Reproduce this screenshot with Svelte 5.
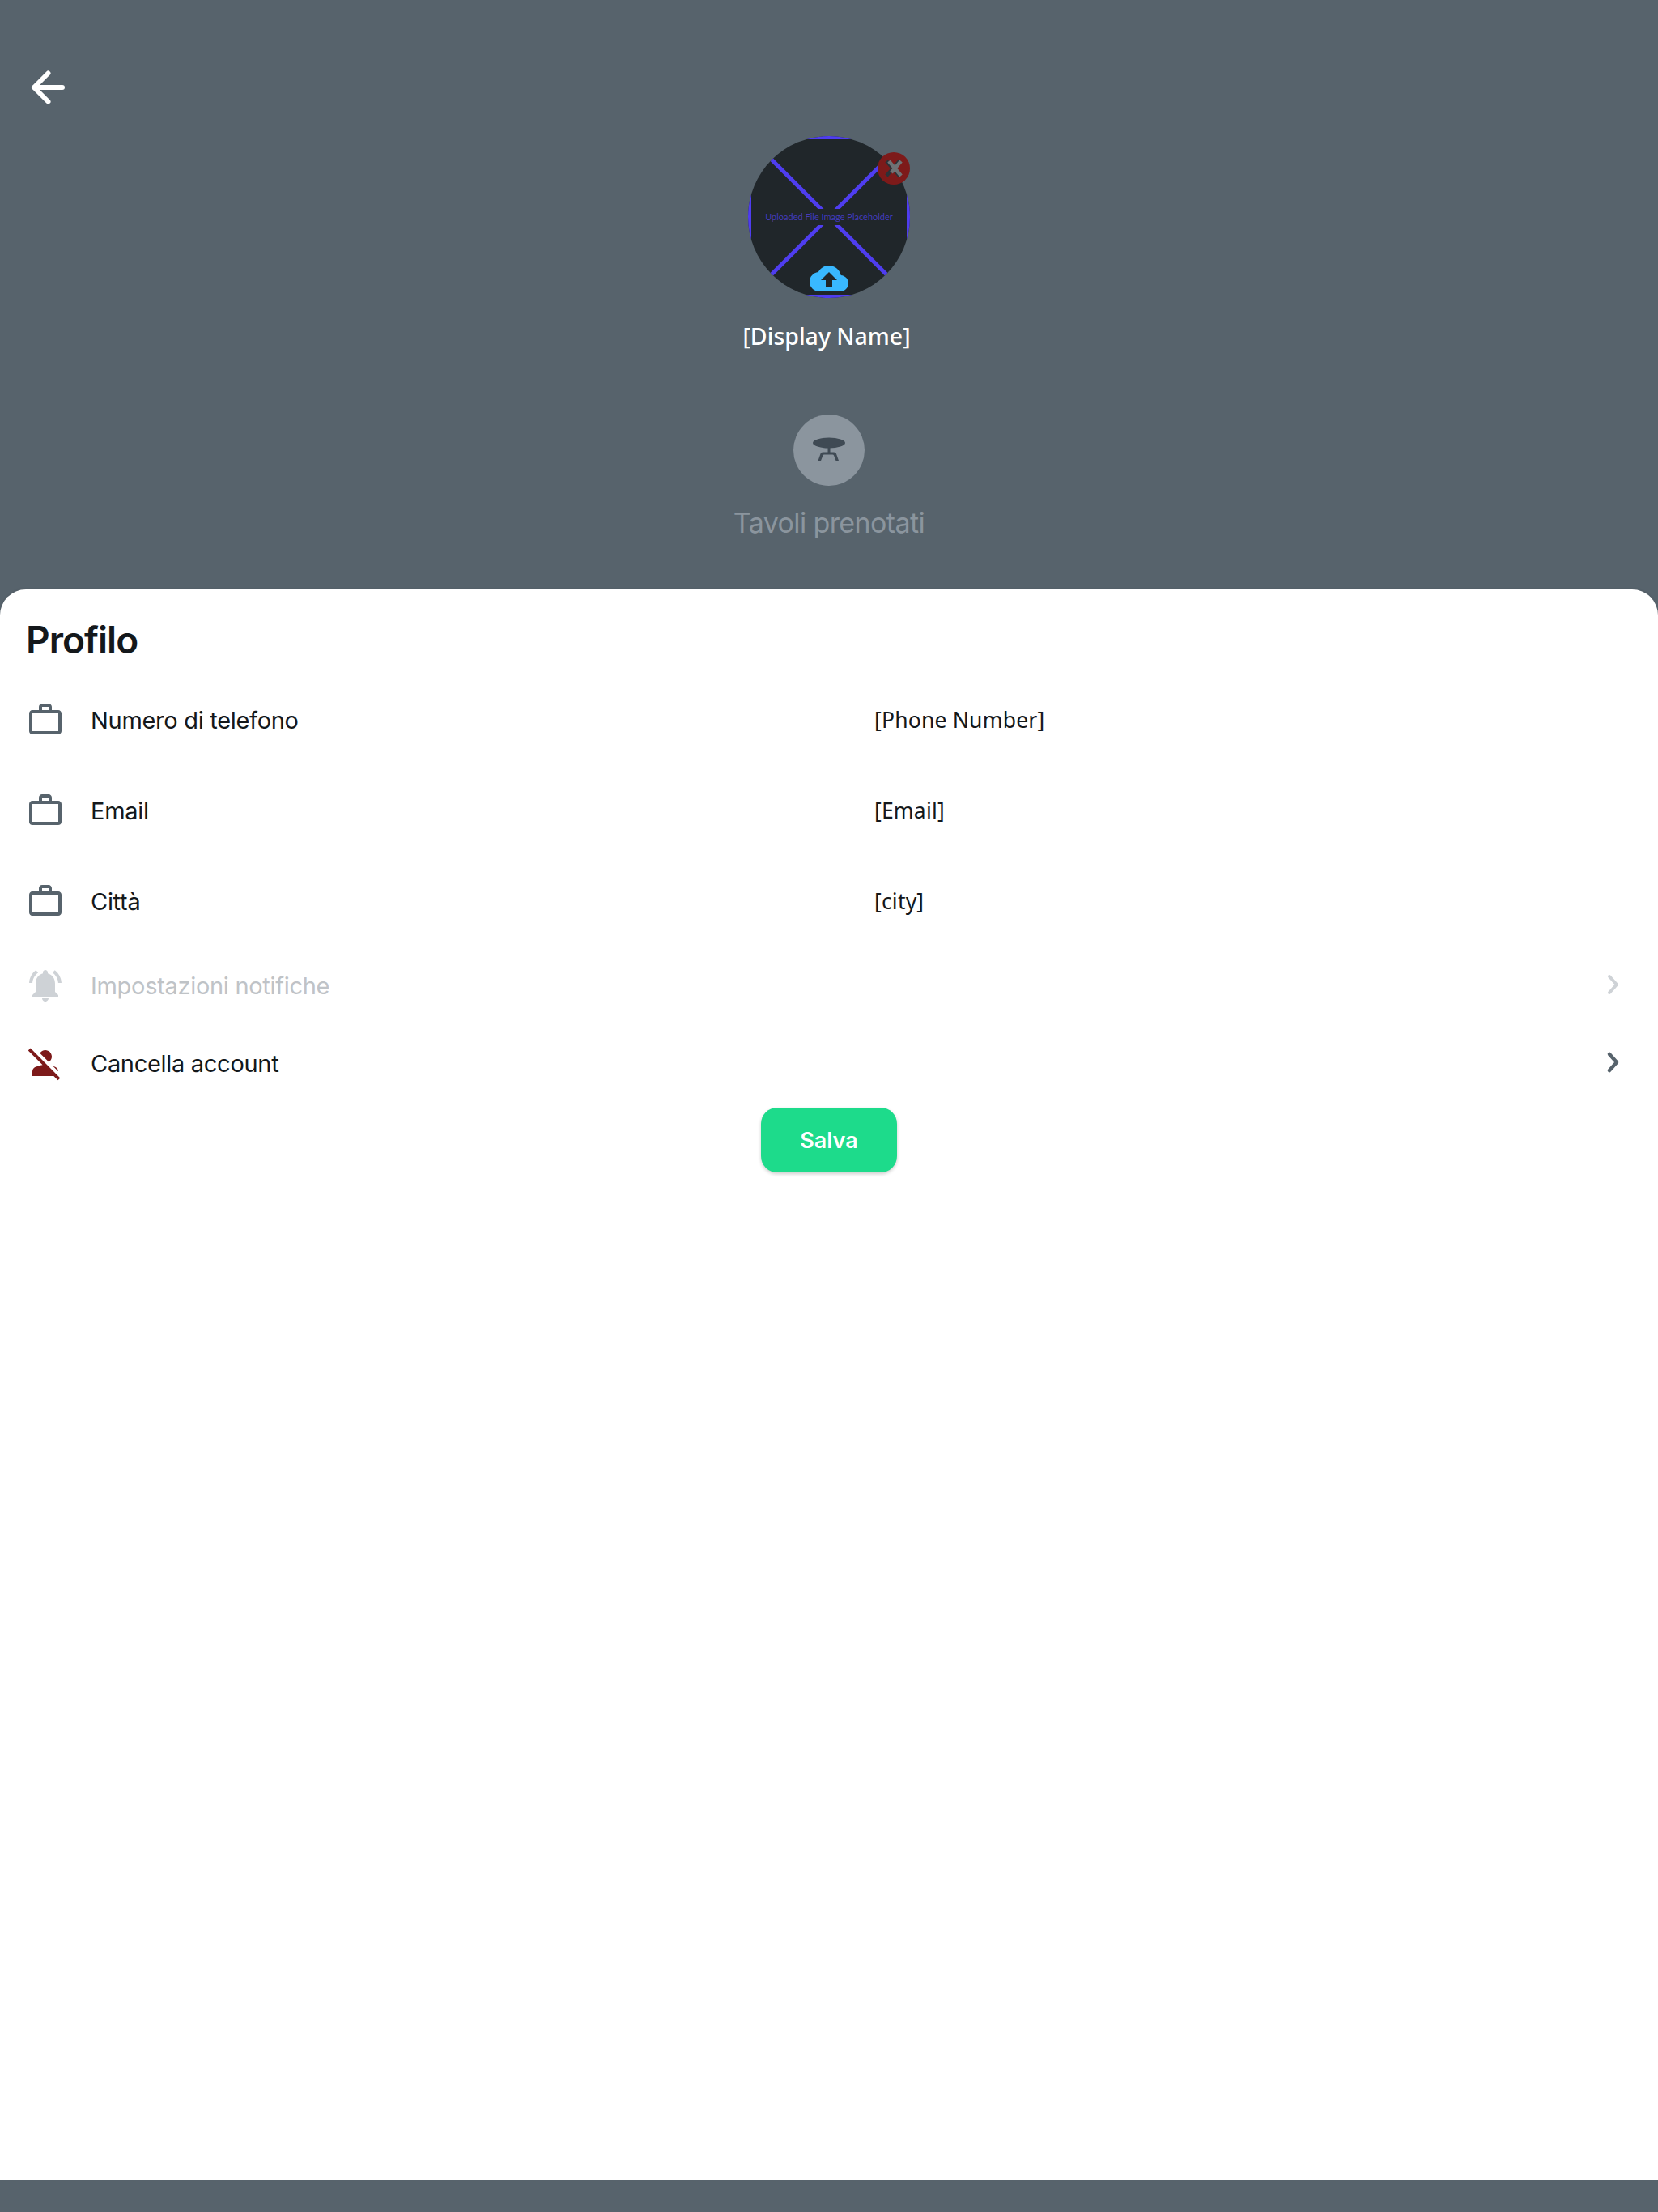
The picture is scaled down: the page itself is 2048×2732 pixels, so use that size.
<script>
  const rows = [
    { label: 'Numero di telefono', value: '[Phone Number]' },
    { label: 'Email', value: '[Email]' },
    { label: 'Città', value: '[city]' }
  ];
</script>

<div class="page">
  <header class="hero">
    <button class="back" aria-label="Indietro">
      <svg width="48" height="48" viewBox="0 0 48 48" fill="none" stroke="#fff" stroke-width="6" stroke-linecap="round" stroke-linejoin="round">
        <path d="M41 24H6M23.500 6.500 6 24l17.500 17.500" />
      </svg>
    </button>

    <div class="avatar">
      <svg class="placeholder" width="200" height="200" viewBox="0 0 200 200">
        <rect width="200" height="200" fill="#20262a" />
        <rect x="2" y="2" width="196" height="196" fill="none" stroke="#4f3df0" stroke-width="4" />
        <path d="M0 0 200 200M200 0 0 200" stroke="#4f3df0" stroke-width="5" />
        <rect x="14" y="90" width="172" height="20" fill="#20262a" />
        <text x="100" y="104" text-anchor="middle" class="ph-text">Uploaded File Image Placeholder</text>
        <path transform="translate(76 152) scale(2)" fill="#39b8ff" d="M19.350 10.040C18.670 6.590 15.640 4 12 4 9.110 4 6.600 5.640 5.350 8.040 2.340 8.360 0 10.910 0 14c0 3.310 2.690 6 6 6h13c2.760 0 5-2.240 5-5 0-2.640-2.050-4.780-4.650-4.960zM14 13v4h-4v-4H7l5-5 5 5h-3z" />
      </svg>
      <span class="remove">
        <svg width="40" height="40" viewBox="0 0 40 40" fill="none" stroke-width="4.500">
          <path d="M11 11l16 18M27 11 11 29" stroke="#2b3238" />
          <path d="M14 11l15 18M29 11 17 25" stroke="#6f7275" />
        </svg>
      </span>
    </div>

    <div class="display-name">[Display Name]</div>

    <div class="table-circle">
      <svg width="48" height="48" viewBox="0 0 48 48" fill="#3f4a54">
        <ellipse cx="24" cy="15" rx="20" ry="6.500" />
        <path d="M22.500 20h3v6.500h4.500c1.500 0 2.500.7 3 2l3 8.500h-3.500l-2.500-6.500c-.3-.7-.8-1-1.500-1H18c-.7 0-1.200.3-1.500 1L14 37h-3.500l3-8.500c.5-1.300 1.500-2 3-2h6z" />
      </svg>
    </div>
    <div class="table-label">Tavoli prenotati</div>
  </header>

  <main class="sheet">
    <h1>Profilo</h1>

    {#each rows as row}
      <div class="row field">
        <div class="left">
          <svg width="48" height="48" viewBox="0 0 24 24" fill="#57636c">
            <path d="M14 6V4h-4v2h4zM4 8v11h16V8H4zm16-2c1.110 0 2 .890 2 2v11c0 1.110-.890 2-2 2H4c-1.110 0-2-.890-2-2l.010-11c0-1.110.880-2 1.990-2h4V4c0-1.110.890-2 2-2h4c1.110 0 2 .890 2 2v2h4z" />
          </svg>
          <span class="label">{row.label}</span>
        </div>
        <span class="value">{row.value}</span>
      </div>
    {/each}

    <div class="row link disabled">
      <div class="left">
        <svg width="48" height="48" viewBox="0 0 24 24" fill="#ced2d6">
          <path d="M7.580 4.080L6.150 2.650C3.750 4.480 2.170 7.300 2.030 10.500h2c.150-2.650 1.510-4.970 3.550-6.420zm12.390 6.420h2c-.150-3.200-1.730-6.020-4.120-7.850l-1.420 1.430c2.020 1.450 3.390 3.770 3.540 6.420zM18 11c0-3.070-1.640-5.640-4.500-6.320V4c0-.830-.670-1.500-1.500-1.500s-1.500.670-1.500 1.500v.680C7.630 5.360 6 7.920 6 11v5l-2 2v1h16v-1l-2-2v-5zm-6 11c.140 0 .270-.010.400-.040.650-.140 1.180-.580 1.440-1.180.100-.240.150-.500.150-.780h-4c.010 1.100.900 2 2.010 2z" />
        </svg>
        <span class="label">Impostazioni notifiche</span>
      </div>
      <svg class="chevron" width="20" height="28" viewBox="0 0 20 28" fill="none" stroke="#ced2d6" stroke-width="4" stroke-linecap="round" stroke-linejoin="round">
        <path d="M5 4l9 10-9 10" />
      </svg>
    </div>

    <div class="row link">
      <div class="left">
        <svg width="48" height="48" viewBox="0 0 24 24" fill="#7d1a1a">
          <path d="M8.650 5.820C9.360 4.720 10.600 4 12 4c2.210 0 4 1.790 4 4 0 1.400-.720 2.640-1.820 3.350L8.650 5.820zM20 17.170c-.020-1.100-.630-2.110-1.610-2.620-.540-.280-1.130-.540-1.770-.760L20 17.170zM21.190 21.190L2.810 2.810 1.390 4.220l8.890 8.890c-1.810.230-3.390.790-4.670 1.450C4.610 15.070 4 16.100 4 17.220V20h13.170l2.610 2.610 1.410-1.420z" />
        </svg>
        <span class="label">Cancella account</span>
      </div>
      <svg class="chevron" width="20" height="28" viewBox="0 0 20 28" fill="none" stroke="#57636c" stroke-width="4.500" stroke-linecap="round" stroke-linejoin="round">
        <path d="M5 4l9 10-9 10" />
      </svg>
    </div>

    <div class="actions">
      <button class="save">Salva</button>
    </div>
  </main>
</div>

<style>
  :global(body) {
    margin: 0;
    background: #57636c;
  }

  .page {
    height: 2732px;
    display: flex;
    flex-direction: column;
    background: #57636c;
    font-family: Inter, 'Noto Sans', sans-serif;
  }

  .hero {
    height: 728px;
    box-sizing: border-box;
    padding-top: 84px;
    display: flex;
    flex-direction: column;
    align-items: center;
  }

  .back {
    align-self: flex-start;
    width: 48px;
    height: 48px;
    margin-left: 36px;
    padding: 0;
    border: 0;
    background: none;
  }

  .back svg {
    display: block;
  }

  .avatar {
    position: relative;
    width: 200px;
    height: 200px;
    margin-top: 36px;
  }

  .placeholder {
    display: block;
    border-radius: 50%;
  }

  .ph-text {
    font-family: Lato, sans-serif;
    font-size: 11px;
    font-weight: 400;
    fill: #4a3fd6;
    fill-opacity: 0.85;
  }

  .remove {
    position: absolute;
    top: 20px;
    right: 0;
    width: 40px;
    height: 40px;
    border-radius: 50%;
    background: #7d1a1a;
  }

  .remove svg {
    display: block;
  }

  .display-name {
    margin-top: 28px;
    margin-right: 6px;
    font-family: 'Noto Sans', sans-serif;
    font-size: 28.500px;
    line-height: 38px;
    font-weight: 500;
    color: #fff;
  }

  .table-circle {
    width: 88px;
    height: 88px;
    margin-top: 78px;
    border-radius: 50%;
    background: #8b959e;
    display: flex;
    align-items: center;
    justify-content: center;
  }

  .table-label {
    margin-top: 26px;
    font-size: 34px;
    line-height: 40px;
    letter-spacing: -0.6px;
    color: #8b959e;
  }

  .sheet {
    height: 1964px;
    background: #fff;
    border-radius: 32px 32px 0 0;
    box-shadow: 0 -1px 3px rgba(0, 0, 0, 0.08);
  }

  h1 {
    margin: 0;
    height: 105px;
    box-sizing: border-box;
    padding: 36px 0 0 32px;
    font-size: 46px;
    line-height: 52px;
    font-weight: 600;
    letter-spacing: -1px;
    color: #14181b;
  }

  .row {
    display: flex;
    align-items: center;
    padding: 0 32px;
  }

  .field {
    height: 112px;
  }

  .link {
    height: 96px;
    justify-content: space-between;
  }

  .left {
    display: flex;
    align-items: center;
    gap: 32px;
  }

  .field .left {
    width: 1048px;
  }

  .label {
    font-size: 29px;
    letter-spacing: -0.3px;
    color: #14181b;
  }

  .disabled .label {
    color: #bfc3c7;
  }

  .value {
    font-family: 'Noto Sans', sans-serif;
    font-size: 26.500px;
    letter-spacing: 0.2px;
    color: #14181b;
  }

  .chevron {
    margin-right: 13px;
    margin-top: -2px;
  }

  .actions {
    display: flex;
    justify-content: center;
    margin-top: 7px;
  }

  .save {
    width: 168px;
    height: 80px;
    border: 0;
    border-radius: 20px;
    background: #1ddb8b;
    box-shadow: 0 2px 4px rgba(0, 0, 0, 0.2);
    font-family: Inter, sans-serif;
    font-size: 27px;
    font-weight: 600;
    color: #fff;
  }
</style>
